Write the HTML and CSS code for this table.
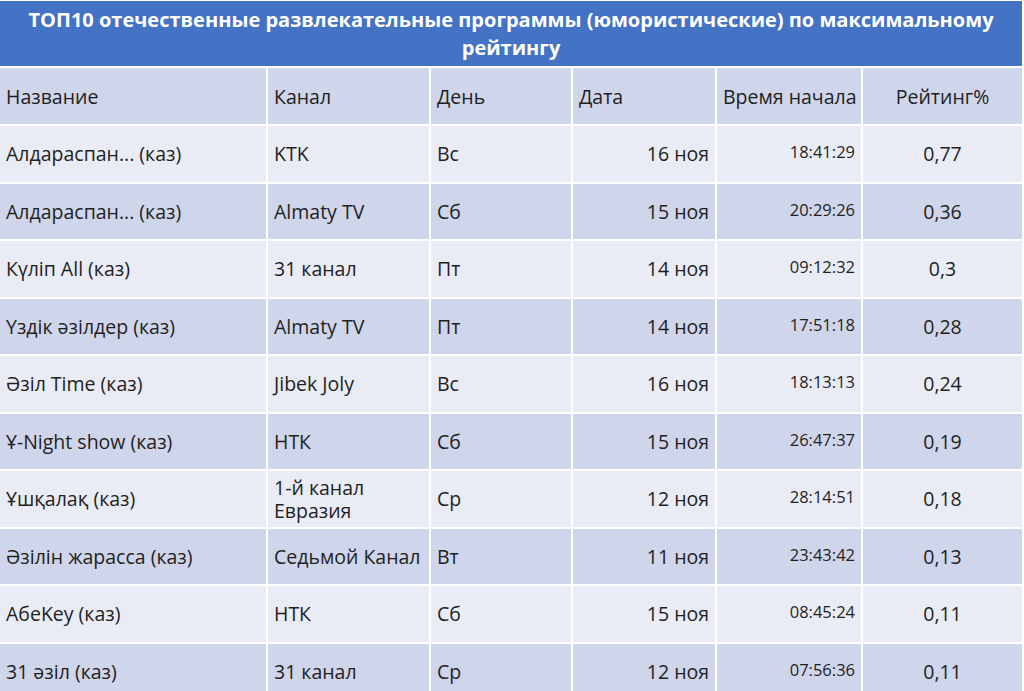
FILE: index.html
```html
<!DOCTYPE html>
<html lang="ru">
<head>
<meta charset="utf-8">
<title>ТОП10</title>
<link rel="stylesheet" href="styles.css">
</head>
<body>
<table class="rating-table">
  <colgroup>
    <col class="c-name"><col class="c-channel"><col class="c-day"><col class="c-date"><col class="c-time"><col class="c-rating">
  </colgroup>
  <thead>
    <tr class="title-row">
      <th colspan="6">ТОП10 отечественные развлекательные программы (юмористические) по максимальному рейтингу</th>
    </tr>
    <tr class="head-row">
      <th>Название</th><th>Канал</th><th>День</th><th>Дата</th><th class="nowrap">Время начала</th><th class="center">Рейтинг%</th>
    </tr>
  </thead>
  <tbody>
    <tr class="light"><td>Алдараспан... (каз)</td><td>KTK</td><td>Вс</td><td class="right">16 ноя</td><td class="time">18:41:29</td><td class="center">0,77</td></tr>
    <tr class="dark"><td>Алдараспан... (каз)</td><td>Almaty TV</td><td>Сб</td><td class="right">15 ноя</td><td class="time">20:29:26</td><td class="center">0,36</td></tr>
    <tr class="light"><td>Күлiп All (каз)</td><td>31 канал</td><td>Пт</td><td class="right">14 ноя</td><td class="time">09:12:32</td><td class="center">0,3</td></tr>
    <tr class="dark"><td>Үздік әзілдер (каз)</td><td>Almaty TV</td><td>Пт</td><td class="right">14 ноя</td><td class="time">17:51:18</td><td class="center">0,28</td></tr>
    <tr class="light"><td>Әзіл Time (каз)</td><td>Jibek Joly</td><td>Вс</td><td class="right">16 ноя</td><td class="time">18:13:13</td><td class="center">0,24</td></tr>
    <tr class="dark"><td>Ұ-Night show (каз)</td><td>НТК</td><td>Сб</td><td class="right">15 ноя</td><td class="time">26:47:37</td><td class="center">0,19</td></tr>
    <tr class="light"><td>Ұшқалақ (каз)</td><td>1-й канал Евразия</td><td>Ср</td><td class="right">12 ноя</td><td class="time">28:14:51</td><td class="center">0,18</td></tr>
    <tr class="dark"><td>Әзілін жарасса (каз)</td><td>Седьмой Канал</td><td>Вт</td><td class="right">11 ноя</td><td class="time">23:43:42</td><td class="center">0,13</td></tr>
    <tr class="light"><td>AбeKey (каз)</td><td>НТК</td><td>Сб</td><td class="right">15 ноя</td><td class="time">08:45:24</td><td class="center">0,11</td></tr>
    <tr class="dark"><td>31 әзіл (каз)</td><td>31 канал</td><td>Ср</td><td class="right">12 ноя</td><td class="time">07:56:36</td><td class="center">0,11</td></tr>
  </tbody>
</table>
</body>
</html>
```

FILE: styles.css
```css
html, body {
  margin: 0;
  padding: 0;
  background: #ffffff;
  overflow: hidden;
}

.rating-table {
  width: 1023px;
  table-layout: fixed;
  border-collapse: separate;
  border-spacing: 0;
  font-family: "Open Sans", "Noto Sans", sans-serif;
  font-size: 19.5px;
  color: #1f1f1f;
}

.c-name { width: 268px; }
.c-channel { width: 163px; }
.c-day { width: 142px; }
.c-date { width: 144px; }
.c-time { width: 146px; }
.c-rating { width: 160px; }

.rating-table th,
.rating-table td {
  box-sizing: border-box;
  border-right: 2px solid #ffffff;
  border-bottom: 2px solid #ffffff;
  padding: 0 6px;
  text-align: left;
  font-weight: normal;
  vertical-align: middle;
  line-height: 23px;
}

.rating-table tr > :last-child {
  border-right: 1px solid #ffffff;
}

.title-row th {
  background: #4472c4;
  color: #ffffff;
  font-weight: bold;
  font-size: 20px;
  line-height: 28px;
  text-align: center;
  height: 68px;
  padding: 0 10px;
  border-top: 1px solid #ffffff;
}

.head-row th {
  background: #cfd5ea;
  height: 58px;
}

.rating-table .nowrap {
  white-space: nowrap;
  padding: 0 4px 0 6px;
}

tbody tr td {
  height: 57.5px;
}

tr.light td { background: #e9ebf5; }
tr.dark td { background: #cfd5ea; }

.rating-table .right { text-align: right; }
.rating-table .center { text-align: center; }
.rating-table .time {
  text-align: right;
  font-size: 16.5px;
  padding-bottom: 4px;
}
```
